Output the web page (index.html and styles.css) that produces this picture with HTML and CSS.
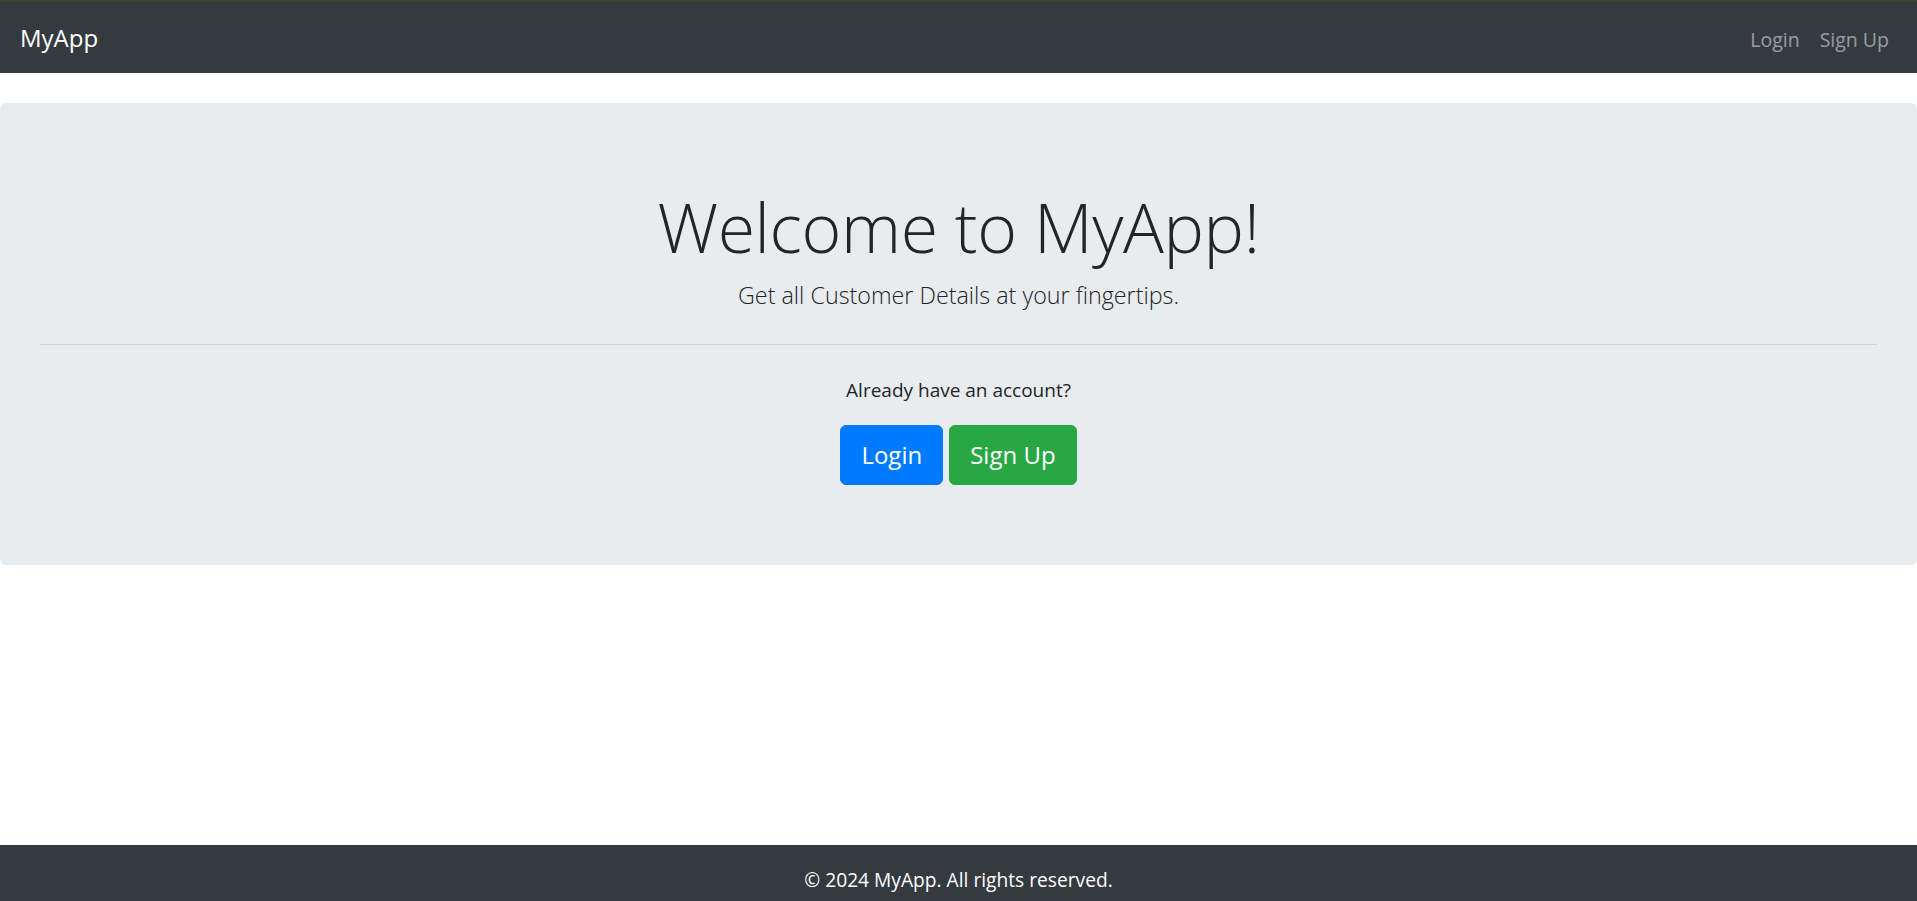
FILE: index.html
```html
<!DOCTYPE html>
<html lang="en">
<head>
<meta charset="utf-8">
<title>MyApp</title>
<link rel="stylesheet" href="styles.css">
</head>
<body>
<div class="page">
  <nav class="navbar">
    <a class="brand" href="#">MyApp</a>
    <ul class="nav">
      <li><a class="nav-link" href="#">Login</a></li>
      <li><a class="nav-link" href="#">Sign Up</a></li>
    </ul>
  </nav>
  <main class="main">
    <section class="jumbotron">
      <h1 class="display">Welcome to MyApp!</h1>
      <p class="lead">Get all Customer Details at your fingertips.</p>
      <hr class="divider">
      <p class="question">Already have an account?</p>
      <div class="actions">
        <a class="btn btn-primary" href="#">Login</a>
        <a class="btn btn-success" href="#">Sign Up</a>
      </div>
    </section>
  </main>
  <footer class="footer">
    <p>© 2024 MyApp. All rights reserved.</p>
  </footer>
</div>
</body>
</html>
```
FILE: styles.css
```css
* { box-sizing: border-box; }
html, body { margin: 0; padding: 0; }
body {
  font-family: "Open Sans", "Noto Sans", sans-serif;
  font-size: 20px;
  line-height: 1.5;
  color: #212529;
  background: #fff;
}
.page {
  display: flex;
  flex-direction: column;
  min-height: 915px;
}
.navbar {
  background: #343a40;
  border-top: 2px solid #3a452f;
  height: 73px;
  padding: 0 18px 0 20px;
  display: flex;
  align-items: center;
  justify-content: space-between;
}
.brand {
  color: #fff;
  text-decoration: none;
  font-size: 24px;
  line-height: 1.5;
}
.nav {
  list-style: none;
  margin: 0;
  padding: 4px 0 0;
  display: flex;
}
.nav-link {
  display: block;
  padding: 10px 10px;
  color: rgba(255,255,255,.5);
  text-decoration: none;
  font-size: 19.5px;
}
.main {
  flex: 1;
  padding-top: 30px;
}
.jumbotron {
  background: #e9ecef;
  border-radius: 6px;
  padding: 80px 40px;
  text-align: center;
}
.display {
  margin: 0 0 10px;
  font-size: 68px;
  font-weight: 300;
  line-height: 84px;
  letter-spacing: -0.4px;
  position: relative;
  top: 2px;
}
.lead {
  margin: 0 0 20px;
  font-size: 23.3px;
  font-weight: 300;
  line-height: 37px;
}
.divider {
  margin: 30px 0;
  border: 0;
  border-top: 1px solid rgba(0,0,0,.1);
}
.question {
  margin: 0 0 20px;
  font-size: 19px;
  line-height: 30px;
}
.actions {
  display: flex;
  justify-content: center;
  gap: 6px;
}
.btn {
  display: inline-block;
  padding: 10px 20px;
  font-size: 24px;
  line-height: 37.5px;
  border: 1px solid transparent;
  border-radius: 6px;
  color: #fff;
  text-decoration: none;
}
.btn-primary { background: #007bff; border-color: #007bff; }
.btn-success { background: #28a745; border-color: #28a745; }
.footer {
  background: #343a40;
  color: #fff;
  text-align: center;
  padding: 20px 0;
}
.footer p {
  margin: 0;
  font-size: 19.2px;
  line-height: 30px;
}
```
